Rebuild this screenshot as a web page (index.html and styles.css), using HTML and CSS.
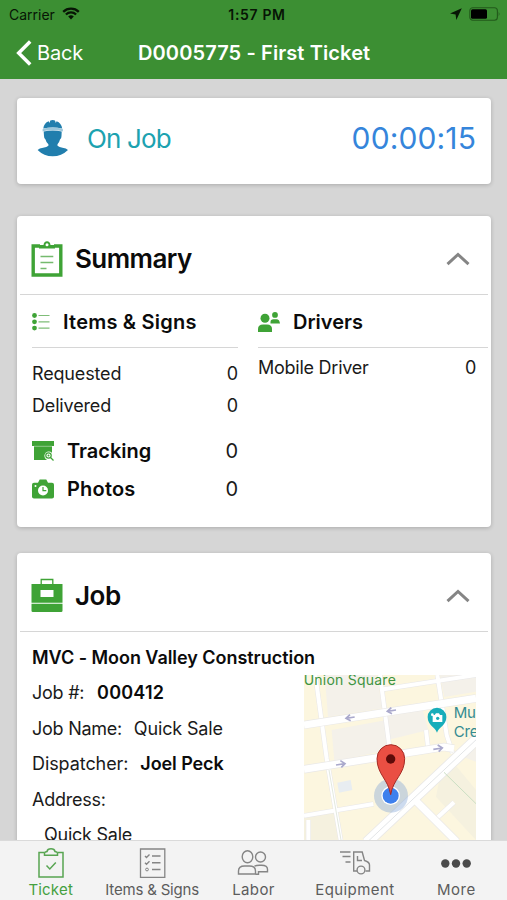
FILE: index.html
```
<!DOCTYPE html>
<html lang="en">
<head>
<meta charset="utf-8">
<title>D0005775 - First Ticket</title>
<link rel="stylesheet" href="styles.css">
</head>
<body>
<div class="app">
  <header class="top">
    <div class="status">
      <div class="status-left"><span class="carrier">Carrier</span>
        <svg class="wifi" viewBox="0 0 18 13" width="18" height="13"><path d="M1.200 4.800a11.200 11.200 0 0 1 15.600 0M3.900 7.500a7.400 7.400 0 0 1 10.200 0" fill="none" stroke="#071505" stroke-width="2.300"/><path d="M6.200 9.600a4.200 4.200 0 0 1 5.600 0L9 12.500z" fill="#071505"/></svg>
      </div>
      <span class="time">1:57 PM</span>
      <div class="status-right">
        <svg viewBox="0 0 12 12" width="12" height="12"><path d="M11.800.2 0 5.600l5.600.8.700 5.500z" fill="#071505"/></svg>
        <svg viewBox="0 0 32 14" width="32" height="14"><rect x=".8" y=".8" width="27.600" height="12.400" rx="3" fill="none" stroke="#22591b" stroke-width="1.100"/><rect x="2" y="2.300" width="16" height="9.400" rx="1.500" fill="#000"/><path d="M29.700 4.700q1.800 2.300 0 4.600z" fill="#22591b"/></svg>
      </div>
    </div>
    <nav class="nav">
      <div class="back">
        <svg viewBox="0 0 16 26" width="16" height="26"><path d="M14.200 1.500 2.700 13l11.500 11.500" fill="none" stroke="#fff" stroke-width="3.500"/></svg>
        <span>Back</span>
      </div>
      <h1>D0005775 - First Ticket</h1>
    </nav>
  </header>

  <main class="content">
    <section class="card timer">
      <svg viewBox="0 0 34 38" width="34" height="38" fill="#217ead"><path d="M6.300 9.500Q7 4 11.700 2.300l.8 1.700.8-2.600Q15.700.6 18 1.400l.8 2.600.8-1.700Q24.300 4 25.200 9.500 15.700 7.300 6.300 9.500z"/><path d="M5.600 12.500V10.200l1-.6q9.100-2 18.300 0l1 .6v2.300l-1.500-.4q-8.700-2-17.300 0z" fill="#9cc6da"/><path d="M6.700 12.600q9-2.200 18 0l-.2 4.400q0 2.700-1.500 3.500-.7 3-2.500 4.700v1.600q1.800 1.400 5 2 3.800.6 5.500 2.200-6.500 6.300-15.300 6.300T.6 31q1.700-1.600 5.500-2.200 3.700-.6 5.300-2v-1.600Q9.200 23.500 8.500 20.500q-1.500-.8-1.500-3.500z"/></svg>
      <span class="on-job">On Job</span>
      <span class="clock">00:00:15</span>
    </section>

    <section class="card summary">
      <header class="card-head">
        <svg class="clipboard" viewBox="0 0 32 37" width="32" height="37"><path d="M9 5H2.200v29h27.600V5H23" fill="none" stroke="#3fa336" stroke-width="3.400"/><path d="M8 7.500V4h4.500q.5-3.700 3.500-3.700T19.500 4H24v3.500z" fill="#3fa336"/><circle cx="16" cy="3.800" r="1.500" fill="#fff"/><path d="M9.500 15.500h12.800M9.500 21.500h12.800M9.500 27.500h6" stroke="#75ba6e" stroke-width="1.500"/></svg>
        <h2>Summary</h2>
        <svg class="chevron" viewBox="0 0 24 14" width="24" height="14"><path d="M1.500 12.200 12 2.500l10.500 9.700" fill="none" stroke="#858585" stroke-width="3"/></svg>
      </header>
      <div class="columns">
        <div class="col items">
          <h3><svg viewBox="0 0 18 18" width="18" height="18"><g fill="#3fa336"><circle cx="2.500" cy="2.500" r="2.400"/><circle cx="2.500" cy="8.800" r="2.400"/><circle cx="2.500" cy="15.100" r="2.400"/></g><path d="M6.500 2.500h11M6.500 8.800h11M6.500 15.100h11" stroke="#7fbd78" stroke-width="1.200"/></svg><span class="items-title">Items &amp; Signs</span></h3>
          <div class="row"><span>Requested</span><span class="num">0</span></div>
          <div class="row"><span class="delivered">Delivered</span><span class="num">0</span></div>
          <div class="stat tracking">
            <svg viewBox="0 0 22 20" width="22" height="20"><path d="M0 0h22v5H0z M2 5h18v14H2z" fill="#3fa336"/><path d="M2 5.300h18" stroke="#a6d3a1" stroke-width=".8"/><circle cx="16.800" cy="14.800" r="4.400" fill="#fff"/><path d="m18 16 3.500 3.500" stroke="#fff" stroke-width="4"/><circle cx="16.500" cy="14.500" r="2.700" fill="none" stroke="#3fa336" stroke-width="1.200"/><circle cx="16.500" cy="14.500" r="1" fill="#3fa336"/><path d="m18.500 16.500 3 3" stroke="#3fa336" stroke-width="1.300"/></svg>
            <b>Tracking</b><span class="num">0</span>
          </div>
          <div class="stat">
            <svg viewBox="0 0 22 20" width="22" height="20"><path d="M2 3.800h4L7.700.5h6.600L16 3.800h4q2 0 2 2v12q0 1.700-2 1.700H2q-2 0-2-1.700v-12q0-2 2-2z" fill="#3fa336"/><circle cx="11" cy="11.500" r="5" fill="#fff"/><path d="M11 8v3.700h3.300" fill="none" stroke="#3fa336" stroke-width="1.200"/><circle cx="3.500" cy="7" r="1" fill="#fff"/></svg>
            <b class="photos">Photos</b><span class="num">0</span>
          </div>
        </div>
        <div class="col drivers">
          <h3><svg viewBox="0 0 22 20" width="22" height="20" fill="#3fa336"><circle cx="7" cy="6.300" r="4.500"/><path d="M0 20v-3q0-4.500 5-4.500h4q5 0 5 4.500v3z"/><circle cx="17" cy="2.900" r="2.900"/><path d="M12.500 11.500V10q0-2.800 3-2.800h3q3 0 3.500 4.300z"/></svg><span>Drivers</span></h3>
          <div class="row driver"><span>Mobile Driver</span><span class="num">0</span></div>
        </div>
      </div>
    </section>

    <section class="card job">
      <header class="card-head">
        <svg viewBox="0 0 32 35" width="32" height="35"><path d="M10.200 6V1.500h11.600V6" fill="none" stroke="#3fa336" stroke-width="1.300"/><path d="M.500 6h31v18.700H.500zM.500 25.700h31v7q0 1.300-1.300 1.300H1.800Q.500 34 .500 32.700z" fill="#3fa336"/><path d="M9.500 12h13v7h-13z" fill="#fff"/></svg>
        <h2 class="job-title">Job</h2>
        <svg class="chevron" viewBox="0 0 24 14" width="24" height="14"><path d="M1.500 12.200 12 2.500l10.500 9.700" fill="none" stroke="#858585" stroke-width="3"/></svg>
      </header>
      <div class="job-body">
        <p><b class="customer">MVC - Moon Valley Construction</b></p>
        <div class="job-grid">
          <div class="facts">
            <p>Job #: <b class="job-no">000412</b></p>
            <p>Job Name: <span class="job-name">Quick Sale</span></p>
            <p class="dispatcher">Dispatcher: <b class="person">Joel Peck</b></p>
            <p>Address:</p>
            <p class="address">Quick Sale</p>
          </div>
          <svg class="map" viewBox="42 45 516 495" width="172" height="165">
            <path fill="#fcf6df" d="M42 45h516v495H42z"/>
            <path fill="#f4f1ea" d="M104 45h155l18 100-163 25zM125 210l165-30 8 90-165 33zM290 160l105-20 20 70-122 30zM450 45h108v50l-95 16zM490 280l68-55v80z"/>
            <path fill="#f5f1df" d="m450 350 50-30 58 70v150l-120-130zM42 470l90-12 20 82H42z"/>
            <path fill="#e8edf1" d="m142 368 40-8 5 30-40 8z"/>
            <g fill="none" stroke="#e8e7e8" stroke-width="15"><path d="m76 45 34 250 42 245M270 45l30 230M442 45l28 180 18 55M280 88l278-43M42 467l208-35M408 210l7 60M55 480v60M440 475l52-48"/></g>
            <g fill="none" stroke="#fff" stroke-width="12"><path d="m76 45 34 250 42 245M270 45l30 230M442 45l28 180 18 55M280 88l278-43M42 467l208-35M408 210l7 60M55 480v60M440 475l52-48"/></g>
            <g fill="none" stroke="#e9e8e7" stroke-width="25"><path d="M42 195 558 115M42 328l420-67 30 5M375 420l125 125"/><path stroke-width="35" d="m230 548 335-315"/></g>
            <g fill="none" stroke="#fff" stroke-width="21"><path d="M42 195 558 115M42 328l420-67 30 5M375 420l125 125"/><path stroke-width="30" d="m230 548 335-315"/></g>
            <path d="m230 548 335-315" stroke="#e3e5e7" stroke-width="3"/>
            <path d="m117 330 36 210" stroke="#d5dccf" stroke-width="2"/>
            <path d="m462 337 96 94" stroke="#cbdfc3" stroke-width="3"/>
            <g fill="none" stroke="#aaa9cc" stroke-width="5"><path d="m194 171-26 4m12-11-12 11 14 7M318 150l-26 4m12-11-12 11 14 7M138 315l27-4m-14-9 14 9-11 11M430 268l27-4m-14-9 14 9-11 11"/></g>
            <text class="place park" x="41" y="76">Union Square</text>
            <text class="place museum" x="491" y="173">Mu</text>
            <text class="place museum" x="491" y="230">Cre</text>
            <path d="M441 218c-5-17-28-21-28-47a28 28 0 0 1 56 0c0 26-23 30-28 47z" fill="#17adba"/>
            <path d="M428 165h6l4-5h9l3 5h7v21h-29z" fill="#fff"/><circle cx="443" cy="175" r="5" fill="#17adba"/><circle cx="427" cy="164" r="4" fill="#fff"/>
            <circle cx="303" cy="407" r="51" fill="#7ba0d5" fill-opacity=".38"/>
            <circle cx="302" cy="407" r="28" fill="#fff"/><circle cx="302" cy="407" r="24" fill="#3e80ed"/>
            <path d="M302 404c-7-46-41-61-41-108a41.500 42 0 0 1 83 0c0 47-35 62-42 108z" fill="#ea4f43" stroke="#a52a24" stroke-width="3"/>
            <circle cx="302" cy="297" r="14" fill="#5d0b09"/>
          </svg>
        </div>
      </div>
    </section>
  </main>

  <footer class="tabs">
    <div class="tab active">
      <svg viewBox="0 0 34 34" width="34" height="34" fill="none" stroke="#58a552" stroke-width="1.500"><path d="M10 6.500H5v24.500h24V6.500h-5M10.500 9.300V7q0-1 2.500-1.500Q13.500 2.800 17 2.800t4 2.700q2.500.5 2.500 1.500v2.300zM12.500 19.500l3.300 3.500 6-6.500"/></svg>
      <span>Ticket</span>
    </div>
    <div class="tab tab-items">
      <svg viewBox="0 0 34 34" width="34" height="34" fill="none" stroke="#858585"><path stroke-width="1.300" d="M5.500 3h24.300v28.300H5.500z"/><path stroke-width="1.400" d="M17 10h8.500M17 16.800h8.500M17 23.500h8.500M10 10l1.500 1.500 3-3M10 16.800l1.500 1.500 3-3"/><circle cx="12" cy="23.500" r="1.400"/></svg>
      <span>Items &amp; Signs</span>
    </div>
    <div class="tab labor">
      <svg viewBox="0 0 34 34" width="34" height="34" fill="none" stroke="#858585" stroke-width="1.400"><ellipse cx="11.500" cy="10.800" rx="5.300" ry="6"/><circle cx="24.500" cy="11" r="5"/><path d="M2.500 28v-3q0-5 6-5h5q6 0 6 5v3zM18.500 20.200q2-1 5-1h2q6 0 6 4v2.500h-9v2.500h-3"/></svg>
      <span>Labor</span>
    </div>
    <div class="tab equipment">
      <svg viewBox="0 0 34 34" width="34" height="34" fill="none" stroke="#858585" stroke-width="1.400"><path d="M2 6h10.500M4.500 10.500h8M7.500 16h5M19 25h-3.300V6h8.500L26.500 14.500q5 1.500 5 4.500v6h-4M19.500 10v4.500h4.500"/><circle cx="23" cy="24" r="3.900"/></svg>
      <span>Equipment</span>
    </div>
    <div class="tab more">
      <svg viewBox="0 0 34 34" width="34" height="34" fill="#4b4b4b"><circle cx="6.300" cy="17.500" r="4.200"/><circle cx="17" cy="17.500" r="4.200"/><circle cx="27.700" cy="17.500" r="4.200"/></svg>
      <span>More</span>
    </div>
  </footer>
</div>
</body>
</html>
```
FILE: styles.css
```
* { box-sizing: border-box; }
body { margin: 0; font-family: Inter, "Liberation Sans", sans-serif; color: #1a1a1a; }
h1, h2, h3, p { margin: 0; }
svg { display: block; flex: none; }
b, h1, h2, h3 { font-weight: 600; color: #0b0b0b; }

.app { display: flex; flex-direction: column; width: 507px; height: 900px; overflow: hidden; background: #d6d6d6; }

.top { flex: none; height: 79px; background: #3c8f33; }
.status { display: grid; grid-template-columns: 1fr auto 1fr; align-items: center; height: 28px; padding: 0 6px 0 9px; font-size: 14px; color: #071505; }
.status-left { display: flex; align-items: center; gap: 7px; }
.wifi { margin-top: -2px; }
.time { padding-left: 4px; font-weight: 600; letter-spacing: .65px; }
.status-right { display: flex; align-items: center; justify-content: flex-end; gap: 7px; }
.nav { display: grid; grid-template-columns: 122px 1fr; align-items: center; height: 49px; padding-left: 16px; color: #fff; }
.back { display: flex; align-items: center; gap: 5px; font-size: 20px; letter-spacing: -.2px; }
.nav h1 { font-size: 20px; letter-spacing: .11px; color: #fff; }

.content { flex: 1; min-height: 0; overflow: hidden; padding: 19px 16px 0 17px; }
.card { background: #fff; border-radius: 4px; box-shadow: 0 1px 4px rgba(0, 0, 0, .2); }

.timer { display: flex; align-items: center; height: 86px; padding: 0 15px 6px 20px; }
.on-job { margin-left: 16px; font-size: 26px; font-weight: 400; letter-spacing: -.85px; color: #1ca2b0; }
.clock { margin-left: auto; font-size: 30px; letter-spacing: .12px; color: #3585db; }

.card-head { display: flex; align-items: center; height: 79px; margin: 0 3px; padding: 7px 18px 0 11px; border-bottom: 1.500px solid #d6d6d6; }
.card-head h2 { margin: -1px 0 0 12px; font-size: 26px; letter-spacing: -.55px; }
.card-head .job-title { letter-spacing: -.5px; }
.clipboard { margin-top: 1px; }
.chevron { margin-left: auto; margin-top: 1px; }

.summary { height: 311px; margin-top: 32px; }
.columns { display: grid; grid-template-columns: 206px 230px; gap: 20px; padding-left: 15px; }
.col h3 { display: flex; align-items: center; height: 53px; padding-top: 1px; border-bottom: 1.500px solid #d6d6d6; font-size: 20px; }
.col h3 span { margin-left: 13px; }
.col h3 .items-title { letter-spacing: .22px; }
.row { display: flex; justify-content: space-between; align-items: center; height: 32px; font-size: 18px; letter-spacing: -.16px; }
.items h3 { margin-bottom: 9px; }
.driver { margin-top: 3px; padding-right: 12px; letter-spacing: -.25px; }
.stat { display: flex; align-items: center; height: 38px; font-size: 20px; }
.tracking { margin-top: 11px; }
.stat b { margin-left: 13px; letter-spacing: 0; }
.stat .photos { letter-spacing: .2px; }
.stat .num { margin-left: auto; }

.job { height: 420px; margin-top: 26px; }
.job-body { padding: 8px 15px 0; font-size: 18px; letter-spacing: -.25px; }
.job-body p { height: 35.400px; line-height: 35.400px; white-space: nowrap; }
.job-body .customer { letter-spacing: -.04px; }
.job-grid { display: flex; justify-content: space-between; }
.job-no { margin-left: 8px; letter-spacing: .2px; }
.job-name { margin-left: 7px; letter-spacing: -.15px; }
.job-body .dispatcher { letter-spacing: -.08px; }
.person { margin-left: 7px; letter-spacing: -.1px; }
.address { padding-left: 12px; }
.place { font-family: Inter, sans-serif; }
.park { font-size: 42px; fill: #3f9442; letter-spacing: .7px; }
.museum { font-size: 45px; fill: #348b91; }

.tabs { flex: none; display: grid; grid-template-columns: repeat(5, 1fr); height: 60px; border-top: 1px solid #dadada; background: #f3f3f3; padding: 5px 0 0; font-size: 15px; color: #5c5c5c; }
.tab { display: flex; flex-direction: column; align-items: center; white-space: nowrap; line-height: 20px; }
.active { color: #45a03f; }
.active span { letter-spacing: .2px; }
.tab-items span { letter-spacing: -.19px; }
.labor span { letter-spacing: .35px; }
.equipment span { letter-spacing: .42px; }
.more span { letter-spacing: .5px; }
```
